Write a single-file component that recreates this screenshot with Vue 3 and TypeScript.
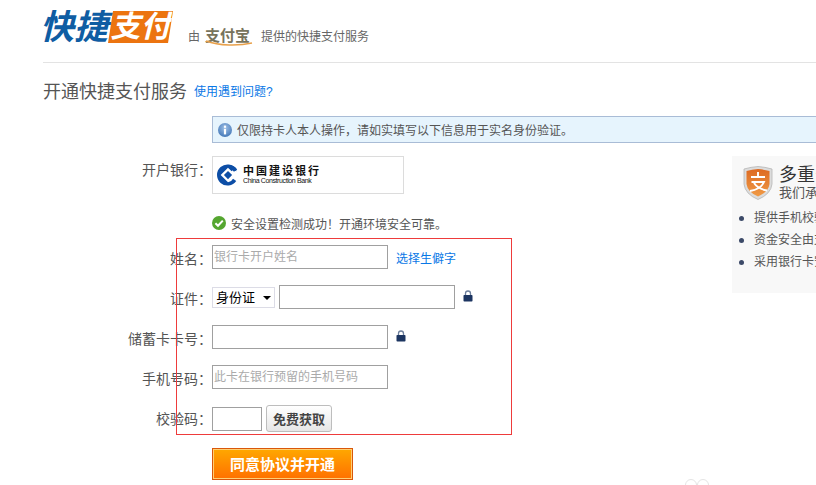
<script setup lang="ts">
const asideItems: string[] = ['提供手机校验服务', '资金安全由支付宝保障', '采用银行卡安全验证']
</script>

<template>
  <div class="page">
    <header class="header">
      <div class="logo">
        <span class="logo-blue">快捷</span>
        <span class="logo-orange">支付</span>
      </div>
      <div class="by">
        <span>由</span>
        <span class="alipay">
          <span class="alipay-text">支付宝</span>
          <svg class="alipay-swoosh" viewBox="0 0 48 6" aria-hidden="true">
            <path d="M1 1 C14 6 34 6 47 3" fill="none" stroke="#e8a04a" stroke-width="1.4" />
          </svg>
        </span>
        <span>提供的快捷支付服务</span>
      </div>
    </header>

    <div class="title-row">
      <h1 class="title">开通快捷支付服务</h1>
      <a class="help">使用遇到问题?</a>
    </div>

    <div class="info">
      <svg class="info-icon" viewBox="0 0 14 14" aria-hidden="true">
        <defs>
          <radialGradient id="ig" cx="50%" cy="35%" r="70%">
            <stop offset="0" stop-color="#9dbfe6" />
            <stop offset="1" stop-color="#3f74b5" />
          </radialGradient>
        </defs>
        <circle cx="7" cy="7" r="7" fill="url(#ig)" />
        <rect x="5.9" y="2.6" width="2.2" height="2.2" fill="#fff" />
        <rect x="5.9" y="5.8" width="2.2" height="5.6" fill="#fff" />
      </svg>
      <span>仅限持卡人本人操作，请如实填写以下信息用于实名身份验证。</span>
    </div>

    <div class="body">
      <form class="form" @submit.prevent>
        <div class="row bank-row">
          <label class="label">开户银行：</label>
          <div class="bank">
            <svg class="bank-logo" viewBox="0 0 24 24" aria-hidden="true">
              <path d="M21 5.5 A11.5 11.5 0 1 0 21 18.5 L17.5 16 A7.5 7.5 0 0 1 12 20 L4 12 L12 4 L16 8 L18 6 L21 8 Z" fill="#0d4ea6" />
              <path d="M12 7.5 L16.5 12 L12 16.5 L7.5 12 Z" fill="#0d4ea6" />
              <path d="M13 1 A11 11 0 0 1 22 6 L18.5 8.5 A7 7 0 0 0 13 5 Z" fill="#0d4ea6" />
            </svg>
            <div class="bank-text">
              <span class="bank-cn">中国建设银行</span>
              <span class="bank-en">China Construction Bank</span>
            </div>
          </div>
        </div>

        <div class="safe">
          <svg class="safe-icon" viewBox="0 0 14 14" aria-hidden="true">
            <circle cx="7" cy="7" r="7" fill="#55a630" />
            <path d="M3.4 7.2 L6 9.8 L10.8 4.6" fill="none" stroke="#fff" stroke-width="2" />
          </svg>
          <span>安全设置检测成功！开通环境安全可靠。</span>
        </div>

        <div class="row field">
          <label class="label">姓名：</label>
          <input class="input" type="text" placeholder="银行卡开户姓名" />
          <a class="rare">选择生僻字</a>
        </div>

        <div class="row field">
          <label class="label">证件：</label>
          <span class="select-wrap">
            <select class="select">
              <option>身份证</option>
            </select>
          </span>
          <input class="input cert" type="text" />
          <svg class="lock" viewBox="0 0 10 12" aria-hidden="true">
            <path d="M2.5 5.5 V3.5 A2.5 2.5 0 0 1 7.5 3.5 V5.5" fill="none" stroke="#6d7f9c" stroke-width="1.3" />
            <rect x="0.5" y="5" width="9" height="6.5" rx="0.8" fill="#1c3561" />
          </svg>
        </div>

        <div class="row field">
          <label class="label">储蓄卡卡号：</label>
          <input class="input" type="text" />
          <svg class="lock" viewBox="0 0 10 12" aria-hidden="true">
            <path d="M2.5 5.5 V3.5 A2.5 2.5 0 0 1 7.5 3.5 V5.5" fill="none" stroke="#6d7f9c" stroke-width="1.3" />
            <rect x="0.5" y="5" width="9" height="6.5" rx="0.8" fill="#1c3561" />
          </svg>
        </div>

        <div class="row field">
          <label class="label">手机号码：</label>
          <input class="input" type="text" placeholder="此卡在银行预留的手机号码" />
        </div>

        <div class="row code-row">
          <label class="label">校验码：</label>
          <input class="input code" type="text" />
          <button class="get" type="button">免费获取</button>
        </div>

        <button class="submit" type="submit">同意协议并开通</button>
      </form>

      <aside class="aside">
        <div class="aside-head">
          <svg class="shield" viewBox="0 0 30 34" aria-hidden="true">
            <defs>
              <linearGradient id="sg" x1="0" y1="0" x2="0" y2="1">
                <stop offset="0" stop-color="#dd6a22" />
                <stop offset="1" stop-color="#f09a45" />
              </linearGradient>
            </defs>
            <path d="M1 3 Q8 1 15 0.5 Q22 1 29 3 V18 Q28 28 15 33.5 Q2 28 1 18 Z" fill="#dcdcdc" stroke="#b5b5b5" stroke-width="0.8" />
            <path d="M3.5 5 Q9 3.4 15 3 Q21 3.4 26.5 5 V18 Q25.5 26 15 30.5 Q4.5 26 3.5 18 Z" fill="url(#sg)" />
            <path d="M15 6 V11 M8 11 H22 M8.5 16 H21 Q18 23 7 25 M11 17 Q15 23 24 24.5" fill="none" stroke="#fff" stroke-width="1.9" />
          </svg>
          <div class="aside-titles">
            <div class="aside-title">多重安全保障</div>
            <div class="aside-sub">我们承诺资金安全</div>
          </div>
        </div>
        <ul class="aside-list">
          <li v-for="item in asideItems" :key="item">{{ item }}</li>
        </ul>
      </aside>
    </div>

    <div class="annotation"></div>
    <svg class="mark" viewBox="0 0 26 8" aria-hidden="true">
      <circle cx="6" cy="7" r="5.5" fill="none" stroke="#e4e4e4" />
      <circle cx="18" cy="7" r="5.5" fill="none" stroke="#e4e4e4" />
    </svg>
  </div>
</template>

<style scoped>
.page {
  position: relative;
  width: 816px;
  height: 485px;
  overflow: hidden;
  background: #fff;
  color: #555;
  font-family: "Liberation Sans", "Noto Sans CJK SC", sans-serif;
  font-size: 12px;
}
.header {
  display: flex;
  align-items: flex-start;
  height: 62px;
  margin-left: 43px;
  border-bottom: 1px solid #e3e3e3;
}
.logo {
  display: flex;
  align-items: center;
  height: 34px;
  margin-top: 10px;
  font-weight: 700;
  font-style: italic;
  line-height: 34px;
}
.logo-blue {
  width: 65px;
  text-indent: -3px;
  color: #0f5da3;
  font-size: 34px;
  white-space: nowrap;
}
.logo-orange {
  width: 65px;
  height: 32px;
  line-height: 31px;
  background: #ec7410;
  color: #fff;
  text-align: center;
  white-space: nowrap;
  font-size: 30px;
  clip-path: polygon(5px 0, 100% 0, calc(100% - 5px) 100%, 0 100%);
}
.by {
  display: flex;
  align-items: center;
  height: 20px;
  margin: 27px 0 0 15px;
  line-height: 20px;
  color: #666;
}
.alipay {
  position: relative;
  width: 48px;
  height: 18px;
  margin: 0 8px 0 5px;
}
.alipay-text {
  display: block;
  font-size: 15px;
  font-weight: 700;
  line-height: 15px;
  color: #77735c;
  white-space: nowrap;
}
.alipay-swoosh {
  position: absolute;
  left: 0;
  bottom: 0;
  width: 48px;
  height: 6px;
}
.title-row {
  display: flex;
  align-items: center;
  height: 53px;
  margin-left: 43px;
}
.title {
  margin: 0;
  font-size: 18px;
  font-weight: 400;
  color: #555;
}
.help {
  margin: 2px 0 0 7px;
  color: #0a78e6;
  font-size: 12px;
}
.info {
  display: flex;
  align-items: center;
  gap: 5px;
  box-sizing: border-box;
  height: 27px;
  margin-left: 212px;
  padding-left: 5px;
  background: #e6f4fd;
  border: 1px solid #a9bcd6;
  border-right: 0;
  color: #555;
}
.info-icon {
  width: 14px;
  height: 14px;
}
.body {
  display: flex;
  margin-top: 13px;
}
.form {
  width: 732px;
  flex: none;
}
.row {
  display: flex;
  align-items: center;
}
.label {
  flex: none;
  width: 212px;
  padding-top: 4px;
  text-align: right;
  font-size: 14px;
  line-height: 20px;
  color: #555;
  white-space: nowrap;
}
.bank-row {
  align-items: flex-start;
  height: 37px;
}
.bank-row .label {
  padding-top: 0;
  margin-top: 4px;
}
.bank {
  display: flex;
  align-items: center;
  box-sizing: border-box;
  width: 192px;
  height: 38px;
  padding-left: 4px;
  border: 1px solid #dcdcdc;
}
.bank-logo {
  width: 22px;
  height: 24px;
}
.bank-text {
  display: flex;
  flex-direction: column;
  margin-left: 4px;
  color: #111;
}
.bank-cn {
  font-size: 11px;
  font-weight: 700;
  line-height: 11px;
  letter-spacing: 2px;
  white-space: nowrap;
}
.bank-en {
  font-size: 7px;
  line-height: 8px;
  letter-spacing: -0.4px;
  white-space: nowrap;
}
.safe {
  display: flex;
  align-items: center;
  gap: 5px;
  height: 16px;
  margin: 22px 0 14px 212px;
}
.safe-icon {
  width: 14px;
  height: 14px;
}
.field {
  height: 24px;
  margin-bottom: 16px;
}
.input {
  box-sizing: border-box;
  width: 176px;
  height: 24px;
  padding: 0 1px 1px;
  border: 1px solid #a0a0a0;
  background: #fff;
  font-family: inherit;
  font-size: 12px;
  outline: none;
}
.input::placeholder {
  color: #aaa;
}
.rare {
  margin-left: 8px;
  color: #0a78e6;
}
.select-wrap {
  position: relative;
  display: block;
  flex: none;
  width: 63px;
  height: 21px;
  margin-right: 4px;
}
.select-wrap::after {
  content: "";
  position: absolute;
  right: 4px;
  top: 9px;
  border-style: solid;
  border-width: 4px 4px 0;
  border-color: #000 transparent transparent;
  pointer-events: none;
}
.select {
  display: block;
  box-sizing: border-box;
  width: 63px;
  height: 21px;
  padding: 0 0 0 3px;
  border: 1px solid #dcdce6;
  border-radius: 0;
  appearance: none;
  background: #fff;
  color: #000;
  font-family: inherit;
  font-size: 13px;
}
.lock {
  width: 10px;
  height: 12px;
  margin: -2px 0 0 8px;
}
.code-row {
  height: 27px;
}
.code-row .label {
  margin-top: 1px;
  padding-top: 0;
}
.code {
  width: 50px;
  margin-top: 1px;
}
.get {
  box-sizing: border-box;
  width: 66px;
  height: 27px;
  margin-left: 4px;
  padding: 0;
  border: 1px solid #bdbdbd;
  border-radius: 3px;
  background: linear-gradient(#ffffff, #e6e6e6);
  color: #444;
  font-family: inherit;
  font-size: 13px;
  font-weight: 700;
}
.submit {
  display: block;
  box-sizing: border-box;
  width: 141px;
  height: 32px;
  margin: 16px 0 0 212px;
  padding: 0 0 2px;
  border: 1px solid #d9570a;
  box-shadow: inset 0 0 0 1px #ffcf73;
  background: linear-gradient(#ffa800, #ff7000);
  color: #fff;
  font-family: inherit;
  font-size: 15px;
  font-weight: 700;
}
.aside {
  flex: none;
  box-sizing: border-box;
  width: 240px;
  height: 137px;
  padding: 10px 0 0 11px;
  background: #f8f8f8;
  white-space: nowrap;
}
.aside-head {
  display: flex;
  align-items: flex-start;
  gap: 6px;
}
.shield {
  width: 30px;
  height: 34px;
}
.aside-title {
  font-size: 18px;
  line-height: 19px;
  color: #333;
}
.aside-sub {
  font-size: 13px;
  line-height: 15px;
  color: #555;
}
.aside-list {
  margin: 7px 0 0;
  padding: 0;
  list-style: none;
}
.aside-list li {
  position: relative;
  height: 22px;
  padding-left: 11px;
  line-height: 22px;
  color: #555;
}
.aside-list li::before {
  content: "";
  position: absolute;
  left: -4px;
  top: 9px;
  width: 5px;
  height: 5px;
  border-radius: 50%;
  background: #3c4a68;
}
.annotation {
  position: absolute;
  left: 176px;
  top: 238px;
  width: 336px;
  height: 197px;
  box-sizing: border-box;
  border: 1px solid #ee3b3b;
  pointer-events: none;
}
.mark {
  position: absolute;
  left: 685px;
  top: 478px;
  width: 26px;
  height: 8px;
}
</style>
